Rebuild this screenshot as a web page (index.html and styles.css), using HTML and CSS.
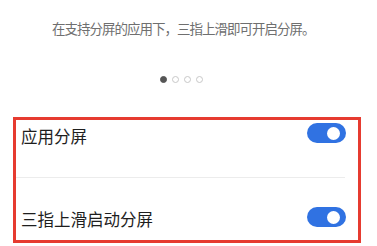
FILE: index.html
```html
<!DOCTYPE html>
<html lang="zh">
<head>
<meta charset="utf-8">
<link rel="stylesheet" href="styles.css">
</head>
<body>
<div class="page">
  <p class="subtitle">在支持分屏的应用下，三指上滑即可开启分屏。</p>
  <div class="dots">
    <span class="dot active"></span>
    <span class="dot"></span>
    <span class="dot"></span>
    <span class="dot"></span>
  </div>
  <div class="panel">
    <div class="row row-first">
      <span class="label">应用分屏</span>
      <span class="toggle"><span class="knob"></span></span>
    </div>
    <div class="divider"></div>
    <div class="row row-second">
      <span class="label">三指上滑启动分屏</span>
      <span class="toggle"><span class="knob"></span></span>
    </div>
  </div>
</div>
</body>
</html>
```
FILE: styles.css
```css
html, body {
  margin: 0;
  padding: 0;
  background: #ffffff;
}
body {
  font-family: "Noto Sans CJK SC", "Noto Sans", sans-serif;
  width: 377px;
  height: 246px;
  overflow: hidden;
}
.page {
  display: flex;
  flex-direction: column;
}
.subtitle {
  margin: 19px 0 0 52px;
  font-size: 13.5px;
  line-height: 18px;
  letter-spacing: -1px;
  color: #6f6f6f;
  white-space: nowrap;
}
.dots {
  display: flex;
  justify-content: center;
  gap: 5px;
  padding-right: 15px;
  margin-top: 39px;
}
.dot {
  width: 5px;
  height: 5px;
  border-radius: 50%;
  border: 1px solid #c8c8c8;
  background: #fff;
}
.dot.active {
  background: #555;
  border-color: #555;
}
.panel {
  margin: 34px 0 0 13px;
  width: 342px;
  height: 120px;
  border: 3px solid #e63b30;
  display: flex;
  flex-direction: column;
}
.row {
  display: flex;
  justify-content: space-between;
  align-items: flex-start;
  padding: 0 12px 0 5px;
  box-sizing: border-box;
}
.row-first {
  height: 57px;
  padding-top: 3px;
}
.row-first .label {
  margin-top: 3px;
}
.row-second {
  flex: 1;
  padding-top: 29px;
}
.row-second .label {
  margin-top: 2px;
}
.label {
  font-size: 16.5px;
  line-height: 20px;
  color: #1e1e1e;
}
.divider {
  height: 1px;
  background: #ececec;
  margin-right: 13px;
}
.toggle {
  width: 39px;
  height: 20px;
  border-radius: 10px;
  background: #3072e2;
  display: flex;
  align-items: center;
  justify-content: flex-end;
  padding-right: 6px;
  box-sizing: border-box;
}
.knob {
  width: 13px;
  height: 13px;
  border-radius: 50%;
  background: #ffffff;
}
```
